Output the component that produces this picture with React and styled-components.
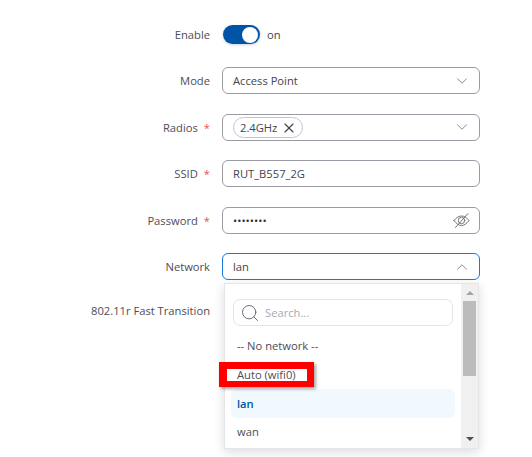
import React from "react";
import styled, { createGlobalStyle } from "styled-components";
import { Search, X, ChevronDown, ChevronUp } from "lucide-react";

const Global = createGlobalStyle`
  html, body { margin: 0; padding: 0; background: #fff; }
  body { font-family: "Open Sans", "Noto Sans", sans-serif; font-size: 11.2px; color: #44444e; }
`;

const Page = styled.div`
  position: relative;
  width: 532px;
  height: 457px;
  overflow: hidden;
  padding-top: 20.25px;
  box-sizing: border-box;
`;

const Row = styled.div`
  display: grid;
  grid-template-columns: 210px 258px;
  column-gap: 12px;
  align-items: center;
  height: ${(p) => p.$h || 27}px;
  margin-bottom: ${(p) => p.$mb ?? 19.5}px;
`;

const Label = styled.div`
  text-align: right;
  color: #4d4d57;
  white-space: nowrap;
`;

const Star = styled.span`
  color: #e8505b;
  margin-left: 6px;
`;

const ToggleWrap = styled.div`
  display: flex;
  align-items: center;
  gap: 7px;
  margin-left: 1px;
`;

const Track = styled.div`
  width: 37px;
  height: 19px;
  border-radius: 10px;
  background: #0054a6;
  position: relative;
  box-shadow: 0 1px 3px rgba(0, 40, 90, 0.2);
`;

const Knob = styled.div`
  position: absolute;
  right: 2px;
  top: 1.5px;
  width: 16px;
  height: 16px;
  border-radius: 50%;
  background: #fff;
`;

const Field = styled.div`
  height: 100%;
  box-sizing: border-box;
  border: 1px solid ${(p) => (p.$active ? "#1a7ae0" : "#9b9ba5")};
  border-radius: 6px;
  background: #fff;
  display: flex;
  align-items: center;
  justify-content: space-between;
  padding: 0 10px;
  color: #44444e;
`;

const Chip = styled.div`
  display: flex;
  align-items: center;
  gap: 4px;
  height: 21px;
  box-sizing: border-box;
  border: 1px solid #c4c4cc;
  border-radius: 11px;
  padding: 0 5px 0 6px;
  margin-top: 1px;
`;

const Dots = styled.span`
  color: #33333c;
`;

const CaretDown = styled(ChevronDown)`
  color: #8a8a92;
  margin-right: -2px;
`;

const CaretUp = styled(ChevronUp)`
  color: #8a8a92;
  margin-right: -2px;
`;

const EyeIcon = styled.svg`
  width: 17px;
  height: 15px;
  margin-right: -1px;
  fill: none;
  stroke: #74747c;
  stroke-width: 1;
  stroke-linecap: round;
`;

const Menu = styled.div`
  position: absolute;
  left: 224px;
  top: 283px;
  width: 255px;
  height: 166px;
  box-sizing: border-box;
  border: 1px solid #e4e6ea;
  background: #fff;
  box-shadow: 0 3px 10px rgba(30, 40, 60, 0.16);
  display: flex;
  overflow: hidden;
`;

const MenuBody = styled.div`
  flex: 1;
  padding: 15px 6px 0 6px;
  display: flex;
  flex-direction: column;
`;

const SearchBox = styled.div`
  height: 27px;
  box-sizing: border-box;
  border: 1px solid #e1e5ec;
  border-radius: 7px;
  display: flex;
  align-items: center;
  gap: 5px;
  padding: 0 6px;
  margin: 0 2px 5px;
  color: #a9a9b2;
`;

const Option = styled.div`
  height: 29px;
  flex: none;
  display: flex;
  align-items: center;
  padding: 0 6px 1px;
  box-sizing: border-box;
  border-radius: 6px;
  color: ${(p) => (p.$selected ? "#0054a6" : "#4d4d57")};
  background: ${(p) => (p.$selected ? "#f1f8fe" : "transparent")};
  font-weight: ${(p) => (p.$selected ? 600 : 400)};

  &:last-child {
    padding-bottom: 3px;
  }
`;

const Scrollbar = styled.div`
  width: 17px;
  background: #f0f0f0;
  display: flex;
  flex-direction: column;
  align-items: center;
`;

const Arrow = styled.div`
  width: 0;
  height: 0;
  border-left: 4px solid transparent;
  border-right: 4px solid transparent;
  ${(p) => (p.$up ? "border-bottom: 4px solid #a3a3a3;" : "border-top: 4px solid #505050;")}
  margin: ${(p) => (p.$up ? "7px 0 6px" : "auto 0 7px")};
`;

const Thumb = styled.div`
  width: 13px;
  height: 75px;
  background: #bcbcbc;
`;

const Highlight = styled.div`
  position: absolute;
  left: 219px;
  top: 362px;
  width: 95px;
  height: 25px;
  box-sizing: border-box;
  border: solid #fe0000;
  border-width: 7px 7px 6px 8px;
  box-shadow: 2px 2px 3px rgba(0, 0, 0, 0.35);
`;

export default function App() {
  return (
    <Page>
      <Global />
      <Row $h={29} $mb={18}>
        <Label>Enable</Label>
        <ToggleWrap>
          <Track>
            <Knob />
          </Track>
          on
        </ToggleWrap>
      </Row>
      <Row>
        <Label>Mode</Label>
        <Field>
          Access Point
          <CaretDown size={18} strokeWidth={1.33} />
        </Field>
      </Row>
      <Row>
        <Label>
          Radios<Star>*</Star>
        </Label>
        <Field>
          <Chip>
            2.4GHz
            <X size={16} color="#44444e" strokeWidth={1.75} />
          </Chip>
          <CaretDown size={18} strokeWidth={1.33} />
        </Field>
      </Row>
      <Row>
        <Label>
          SSID<Star>*</Star>
        </Label>
        <Field>RUT_B557_2G</Field>
      </Row>
      <Row>
        <Label>
          Password<Star>*</Star>
        </Label>
        <Field>
          <Dots>••••••••</Dots>
          <EyeIcon viewBox="0 0 17 15">
            <path d="M1 7.5C3 4.8 5.6 3 8.5 3S14 4.8 16 7.5C14 10.2 11.4 12.5 8.5 12.5S3 10.2 1 7.5Z" />
            <circle cx="8.5" cy="7.5" r="3.2" />
            <path d="M2.5 14.5L15 .5" />
          </EyeIcon>
        </Field>
      </Row>
      <Row $mb={16.25}>
        <Label>Network</Label>
        <Field $active>
          lan
          <CaretUp size={18} strokeWidth={1.33} />
        </Field>
      </Row>
      <Row>
        <Label>802.11r Fast Transition</Label>
      </Row>
      <Menu>
        <MenuBody>
          <SearchBox>
            <Search size={20} color="#6c6c75" strokeWidth={1.2} />
            Search...
          </SearchBox>
          <Option>-- No network --</Option>
          <Option>Auto (wifi0)</Option>
          <Option $selected>lan</Option>
          <Option>wan</Option>
        </MenuBody>
        <Scrollbar>
          <Arrow $up />
          <Thumb />
          <Arrow />
        </Scrollbar>
      </Menu>
      <Highlight />
    </Page>
  );
}
